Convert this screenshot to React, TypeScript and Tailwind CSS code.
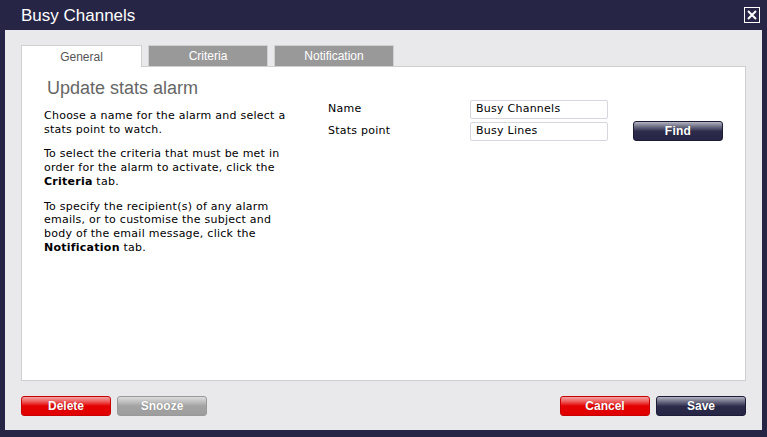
import React from "react";

const tahoma = "font-['Liberation_Sans',Arial,sans-serif]";
const verdana = "font-['DejaVu_Sans',Verdana,sans-serif]";

function Btn({ label, kind }: { label: string; kind: "red" | "gray" | "navy" }) {
  const bg =
    kind === "red"
      ? "bg-[linear-gradient(#f5a3a3_0%,#ee5c5c_25%,#e40000_50%,#e00000_100%)] border-[#c80000]"
      : kind === "gray"
      ? "bg-[linear-gradient(#dcdcdc_0%,#c2c2c2_25%,#a3a3a3_50%,#9d9d9d_100%)] border-[#999999]"
      : "bg-[linear-gradient(#b4b4c2_0%,#6f6f86_25%,#2c2b4a_52%,#262545_100%)] border-[#1d1c38]";
  return (
    <button
      className={`w-[90px] h-[20px] rounded-[3px] border ${bg} text-white text-[12px] font-bold leading-none ${tahoma} flex items-center justify-center [text-shadow:0_0_1px_rgba(0,0,0,0.3)]`}
    >
      {label}
    </button>
  );
}

export default function App() {
  return (
    <div className="w-[767px] h-[437px] bg-[#262545] flex flex-col overflow-hidden">
      <div className="h-[30px] flex items-center justify-between pl-[21px] pr-[7px]">
        <span className={`text-white text-[17px] ${tahoma} leading-none`}>Busy Channels</span>
        <div className="w-[16px] h-[16px] border border-white flex items-center justify-center">
          <svg width="10" height="10" viewBox="0 0 10 10">
            <path d="M1 1 L9 9 M9 1 L1 9" stroke="white" strokeWidth="2" />
          </svg>
        </div>
      </div>
      <div className="mx-[5px] h-[400px] bg-[#e9e9eb] flex flex-col pl-[16px] pr-[15px] pt-[15px]">
        <div className="flex gap-[6px] h-[21px]">
          <div className={`w-[121px] h-[22px] bg-white border border-[#d0d0d0] border-b-0 flex items-center justify-center text-[12px] text-[#555] ${tahoma} relative z-10`}>
            General
          </div>
          <div className={`w-[120px] h-[21px] bg-[#999999] border border-[#d0d0d0] border-b-0 flex items-center justify-center text-[12px] text-white ${tahoma}`}>
            Criteria
          </div>
          <div className={`w-[120px] h-[21px] bg-[#999999] border border-[#d0d0d0] border-b-0 flex items-center justify-center text-[12px] text-white ${tahoma}`}>
            Notification
          </div>
        </div>
        <div className="w-[725px] h-[315px] bg-white border border-[#cfcfcf] flex">
          <div className="w-[280px] pl-[22px] pt-[10px]">
            <h1 className={`text-[18px] text-[#666] ${tahoma} leading-[22px] pl-[3px]`}>Update stats alarm</h1>
            <div className={`${verdana} text-[11px] tracking-[0.25px] leading-[13.7px] text-black mt-[10px] w-[250px]`}>
              <p>Choose a name for the alarm and select a stats point to watch.</p>
              <p className="mt-[11px]">
                To select the criteria that must be met in order for the alarm to activate, click the{" "}
                <b>Criteria</b> tab.
              </p>
              <p className="mt-[11px]">
                To specify the recipient(s) of any alarm emails, or to customise the subject and body of the email
                message, click the <b>Notification</b> tab.
              </p>
            </div>
          </div>
          <div className={`pl-[26px] pt-[33px] ${verdana} text-[11px] tracking-[0.25px]`}>
            <div className="flex items-center h-[19px]">
              <span className="w-[142px]">Name</span>
              <div className="w-[138px] h-[19px] border border-[#d6d6de] rounded-[2px] flex items-center pl-[5px]">
                Busy Channels
              </div>
            </div>
            <div className="flex items-center h-[19px] mt-[3px]">
              <span className="w-[142px]">Stats point</span>
              <div className="w-[138px] h-[19px] border border-[#d6d6de] rounded-[2px] flex items-center pl-[5px]">
                Busy Lines
              </div>
              <div className="ml-[25px] -mt-[1px]">
                <Btn label="Find" kind="navy" />
              </div>
            </div>
          </div>
        </div>
        <div className="flex justify-between mt-[15px] w-[725px]">
          <div className="flex gap-[6px]">
            <Btn label="Delete" kind="red" />
            <Btn label="Snooze" kind="gray" />
          </div>
          <div className="flex gap-[6px]">
            <Btn label="Cancel" kind="red" />
            <Btn label="Save" kind="navy" />
          </div>
        </div>
      </div>
    </div>
  );
}
